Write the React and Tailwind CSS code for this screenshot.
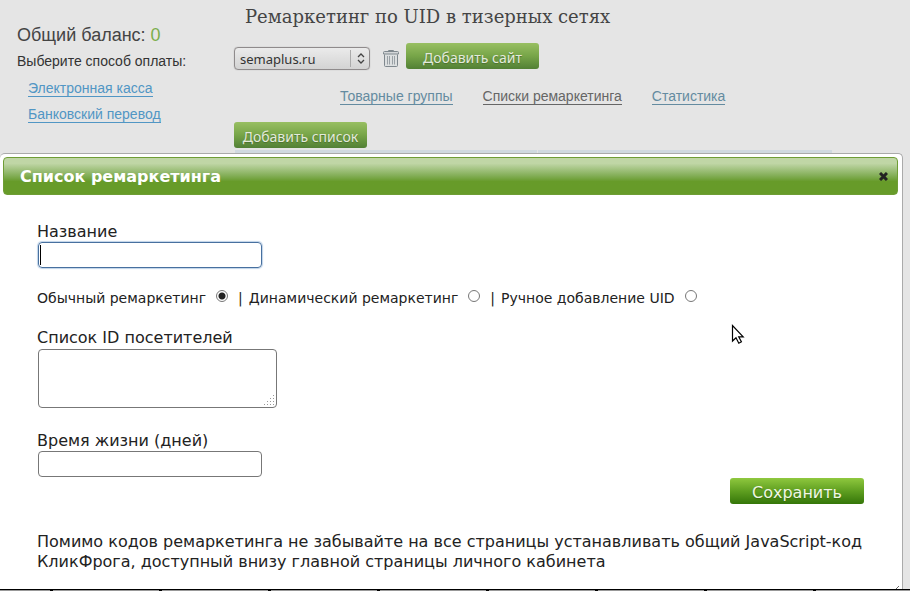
import React, { useState } from 'react';

const tabs = [
  { name: 'Товарные группы', active: false },
  { name: 'Списки ремаркетинга', active: true },
  { name: 'Статистика', active: false }
];

const listTypes = [
  { id: 'regular', label: 'Обычный ремаркетинг' },
  { id: 'dynamic', label: 'Динамический ремаркетинг' },
  { id: 'manual', label: 'Ручное добавление UID' }
];

function TrashIcon() {
  return (
    <svg width="16" height="18" viewBox="0 0 16 18" fill="none" stroke="#7f888e">
      <path d="M5.5 2.5v-1h5v1" />
      <path d="M1.5 5.500v11q0 1 1 1h11q1 0 1-1v-11" fill="#dcdfe0" />
      <path d="M0.5 5V3.5q0-1 1-1h13q1 0 1 1V5z" fill="#d3d6d8" />
      <path d="M4.500 7v8.500M6.500 7v8.500M9.500 7v8.500M11.500 7v8.500" stroke="#9aa1a6" />
    </svg>
  );
}

function GreenButton({ children }) {
  return (
    <button
      type="button"
      className="h-[26px] w-[133px] rounded-[3px] bg-linear-to-b from-[#98bf62] via-[#77a548] to-[#528035] pt-1 font-['Noto_Sans',sans-serif] text-sm leading-5 text-[#e3eadb] [text-shadow:0_1px_1px_#4b7030]"
    >
      {children}
    </button>
  );
}

function Sidebar() {
  return (
    <aside className="w-[234px] shrink-0 pl-[17px] pt-[22px] font-['Liberation_Sans',sans-serif]">
      <p className="text-lg leading-[26px] text-[#444]">
        Общий баланс: <span className="text-[#7cae4c]">0</span>
      </p>
      <p className="text-sm leading-[27px] text-[#333]">Выберите способ оплаты:</p>
      <ul className="pl-[11px] text-sm leading-[26px] text-[#5196c4]">
        <li><a href="#cash" className="border-b border-[#5196c4]">Электронная касса</a></li>
        <li><a href="#bank" className="border-b border-[#5196c4]">Банковский перевод</a></li>
      </ul>
    </aside>
  );
}

function Cabinet() {
  return (
    <main className="min-w-0 flex-1">
      <h1 className="pl-[11px] pt-px font-['DejaVu_Serif',serif] text-lg leading-8 text-[#444]">
        Ремаркетинг по UID в тизерных сетях
      </h1>

      <div className="mt-[10px] flex h-[26px] items-start">
        <div className="relative mt-1 w-[136px]">
          <select
            aria-label="Сайт"
            className="block h-[23px] w-full appearance-none rounded-[4px] border border-[#8f8b8c] bg-linear-to-b from-[#ebebeb] to-[#d3d3d3] pl-[5px] font-['Noto_Sans',sans-serif] text-[13px] leading-5 text-[#333] shadow-[0_0_1px_#999]"
          >
            <option>semaplus.ru</option>
          </select>
          <span className="pointer-events-none absolute inset-y-[3px] right-0 flex w-5 items-center justify-center border-l border-[#aaa]">
            <svg width="8" height="11" viewBox="0 0 8 11" fill="none" stroke="#444" strokeWidth="1.3">
              <path d="M1 4l3-3 3 3M1 7l3 3 3-3" />
            </svg>
          </span>
        </div>
        <button type="button" aria-label="Удалить сайт" className="ml-[13px] mr-[7px] mt-[6px]">
          <TrashIcon />
        </button>
        <GreenButton>Добавить сайт</GreenButton>
      </div>

      <nav className="mt-[17px] flex gap-[30px] pl-[106px] font-['Liberation_Sans',sans-serif] text-sm leading-5">
        {tabs.map((tab) => (
          <a
            key={tab.name}
            href="#tab"
            className={tab.active ? 'text-[#666]' : 'text-[#648ba0]'}
          >
            <span className="border-b border-current">{tab.name}</span>
          </a>
        ))}
      </nav>

      <div className="mt-4">
        <div className="flex">
          <GreenButton>Добавить список</GreenButton>
        </div>
        {/* Top edge of the lists table */}
        <div className="ml-px mr-[78px] mt-[2px] flex h-[3px] gap-px">
          <div className="w-[302px] bg-[#d0d9e0]" />
          <div className="flex-1 bg-[#d0d9e0]" />
        </div>
      </div>
    </main>
  );
}

function ListDialog() {
  const [name, setName] = useState('');
  const [type, setType] = useState('regular');
  const [ids, setIds] = useState('');
  const [days, setDays] = useState('');

  return (
    <section
      role="dialog"
      aria-labelledby="dialog-title"
      className="relative mr-[7px] flex-1 rounded-t-[5px] border border-b-0 border-l-0 border-[#aaa] bg-white pl-[3px] pr-1 pt-[3px] font-['DejaVu_Sans',sans-serif] text-[#222]"
    >
      <header className="flex h-[38px] items-center justify-between rounded-[4px] border border-[#6f9d35] bg-linear-to-b from-[#c0d6a6] from-15% to-[#679b29] to-65% pl-4 pr-[9px] text-white">
        <h2 id="dialog-title" className="pt-px text-base font-bold leading-5">Список ремаркетинга</h2>
        <button type="button" aria-label="Закрыть">
          <svg width="9" height="9" viewBox="0 0 9 9" stroke="#222" strokeWidth="3">
            <path d="M1 1l7 7M8 1L1 8" />
          </svg>
        </button>
      </header>

      <form className="px-[34px] pt-[27px]">
        <label htmlFor="name" className="block text-base leading-5">Название</label>
        <div className="relative ml-px">
          <input
            id="name"
            type="text"
            value={name}
            onChange={(e) => setName(e.target.value)}
            className="block h-[26px] w-[224px] rounded-[4px] border border-[#48709f] px-1 shadow-[0_0_1px_1px_#bfd3e8] outline-none"
          />
          {/* Text caret */}
          <span className="absolute left-[2px] top-[3px] h-5 w-px bg-black" />
        </div>

        <fieldset className="mt-5 flex items-center text-sm leading-5">
          {listTypes.map((item, index) => (
            <React.Fragment key={item.id}>
              {index > 0 && <span className="ml-[10px] mr-[6px]">|</span>}
              <label htmlFor={item.id}>{item.label}</label>
              <input
                id={item.id}
                type="radio"
                name="type"
                checked={type === item.id}
                onChange={() => setType(item.id)}
                className="mb-1 ml-[10px] size-3 appearance-none rounded-full border border-[#777] bg-white checked:bg-[radial-gradient(circle,#222_3px,white_4px)]"
              />
            </React.Fragment>
          ))}
        </fieldset>

        <label htmlFor="ids" className="mt-5 block text-base leading-5">Список ID посетителей</label>
        <div className="relative ml-px mt-px w-[239px]">
          <textarea
            id="ids"
            value={ids}
            onChange={(e) => setIds(e.target.value)}
            className="block h-[59px] w-full resize-none rounded-[4px] border border-[#777] px-1"
          />
          <svg className="absolute bottom-[2px] right-[2px]" width="11" height="11" fill="#999">
            <path d="M9 0h1v1h-1zM6 3h1v1h-1zM9 3h1v1h-1zM3 6h1v1h-1zM6 6h1v1h-1zM9 6h1v1h-1zM0 9h1v1h-1zM3 9h1v1h-1zM6 9h1v1h-1zM9 9h1v1h-1z" />
          </svg>
        </div>

        <label htmlFor="days" className="mt-[23px] block text-base leading-5">Время жизни (дней)</label>
        <input
          id="days"
          type="text"
          value={days}
          onChange={(e) => setDays(e.target.value)}
          className="ml-px block h-[26px] w-[224px] rounded-[4px] border border-[#777] px-1"
        />

        <div className="mt-px flex justify-end">
          <button
            type="button"
            className="h-[26px] w-[134px] rounded-[3px] bg-linear-to-b from-[#8fc83e] via-[#5f9f20] to-[#347608] pt-1 text-base leading-5 text-[#f0f8e4] [text-shadow:0_1px_1px_#3c6c10]"
          >
            Сохранить
          </button>
        </div>

        <p className="mt-7 text-base leading-5">
          Помимо кодов ремаркетинга не забывайте на все страницы устанавливать общий JavaScript-код
          КликФрога, доступный внизу главной страницы личного кабинета
        </p>
      </form>

      {/* Resize corner */}
      <svg className="absolute bottom-0 right-[3px]" width="3" height="3" stroke="#666">
        <path d="M0 3l3-3" />
      </svg>
      {/* Mouse pointer */}
      <svg className="absolute left-[731px] top-[170px]" width="14" height="21" viewBox="0 0 14 21">
        <path
          d="M1.500 1.500v15.500l3.500-3.300 2.800 5.500 2.600-1.400-2.700-5h4.500z"
          fill="white"
          stroke="black"
          strokeWidth="1.2"
        />
      </svg>
    </section>
  );
}

function Taskbar() {
  return (
    <footer className="flex h-[2px] overflow-hidden border-t border-black bg-[#999]">
      <div className="w-[53px] shrink-0 border-r-3 border-black" />
      {[1, 2, 3, 4, 5, 6, 7, 8].map((n) => (
        <div key={n} className="w-[109px] shrink-0 border-r-3 border-black" />
      ))}
    </footer>
  );
}

function App() {
  return (
    <div className="flex min-h-screen flex-col bg-[#e5e5e5]">
      <div className="flex">
        <Sidebar />
        <Cabinet />
      </div>
      <ListDialog />
      <Taskbar />
    </div>
  );
}

export default App;
